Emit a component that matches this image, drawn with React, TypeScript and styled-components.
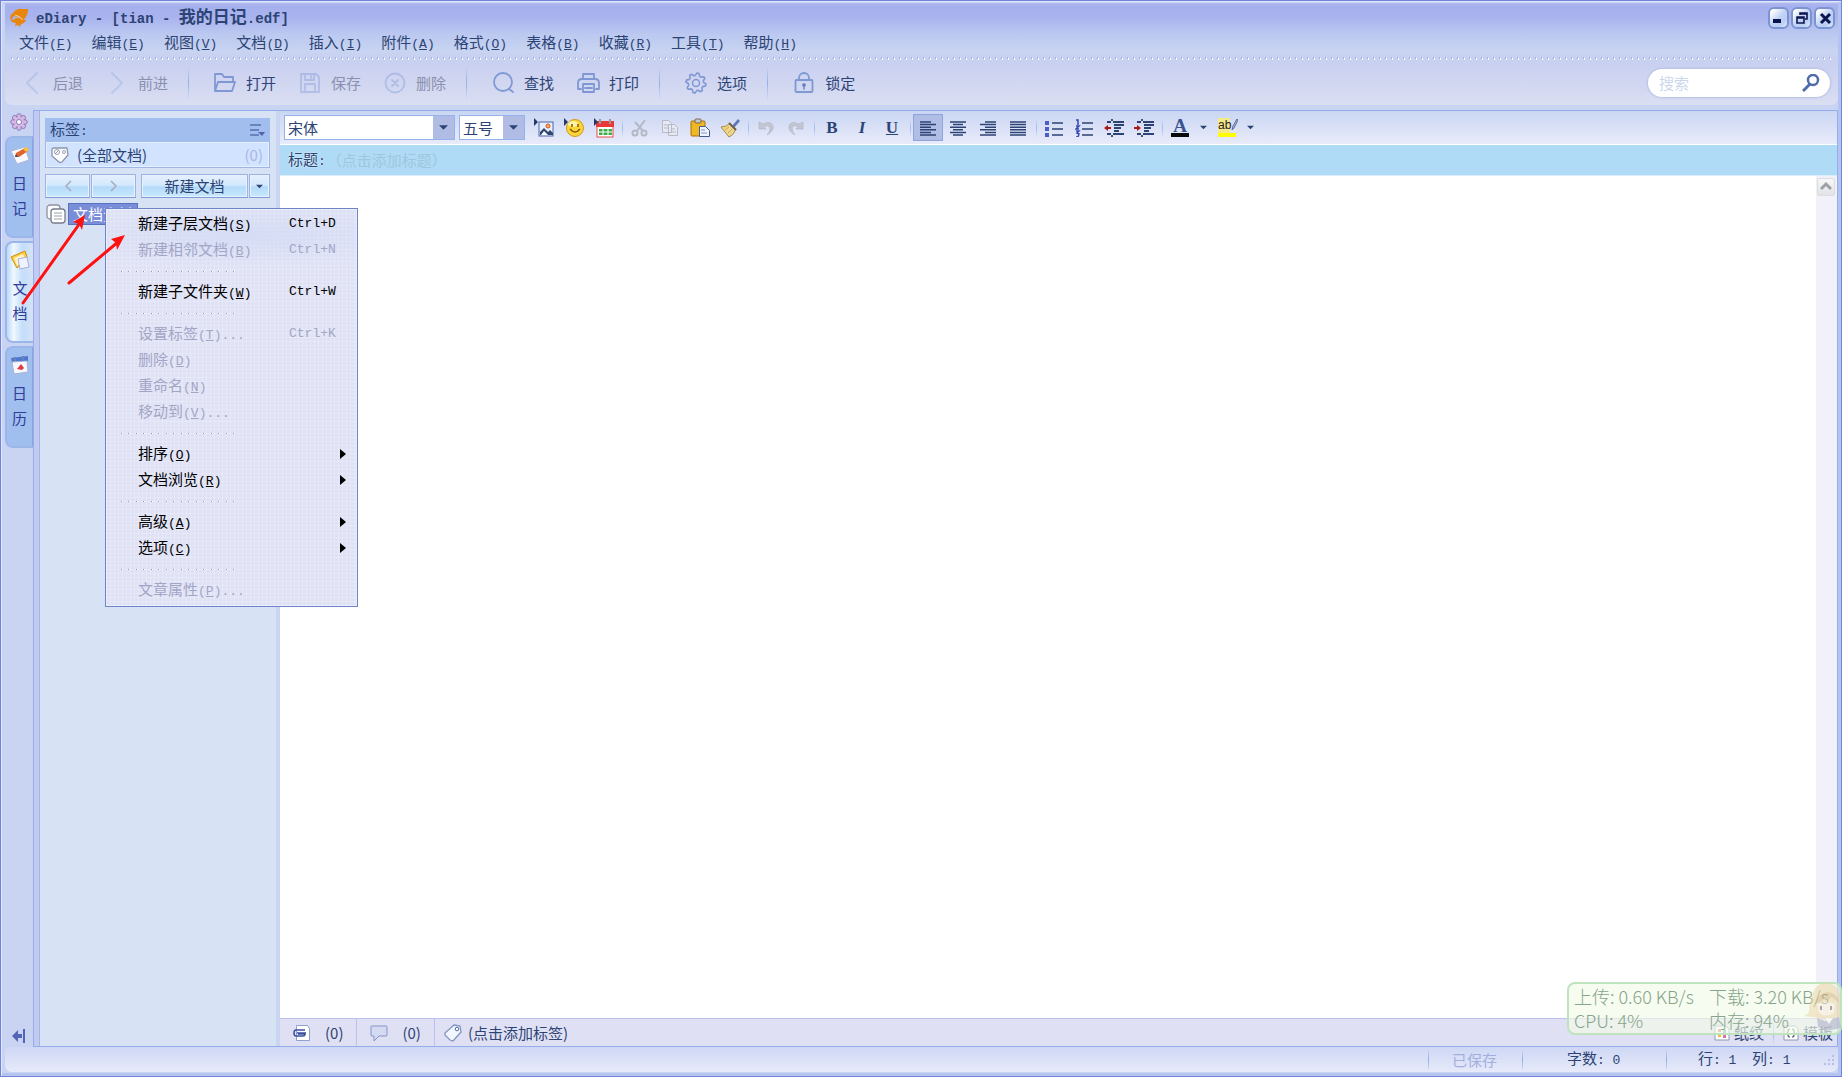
import React from "react";
import styled, { createGlobalStyle } from "styled-components";

const Global = createGlobalStyle`
  *, *::before, *::after { box-sizing: border-box; }
  html, body, #root { height: 100%; margin: 0; }
  body {
    overflow: hidden;
    font: 15px/20px "Noto Sans CJK SC", "Liberation Sans", sans-serif;
    color: #2c4374;
  }
  button, input, select { font: inherit; color: inherit; margin: 0; padding: 0; border: 0; background: none; }
  svg { display: block; flex: none; }
`;

/* ---------- text ---------- */
const Mono = styled.span<{ $size?: number }>`
  font-family: "Liberation Mono", "Noto Sans CJK SC", monospace;
  font-size: ${(p) => p.$size ?? 13}px;
  white-space: pre;
`;

/* Latin runs are set in the monospaced face; an ampersand marks the access key. */
function Label({ children, size }: { children: string; size?: number }) {
  const parts = children.split(/([\x20-\x7e]+)/).filter(Boolean);
  return (
    <span>
      {parts.map((part, i) => {
        if (!/^[\x20-\x7e]/.test(part)) return part;
        const at = part.indexOf("&");
        return (
          <Mono key={i} $size={size}>
            {at < 0 ? part : (
              <>{part.slice(0, at)}<u>{part[at + 1]}</u>{part.slice(at + 2)}</>
            )}
          </Mono>
        );
      })}
    </span>
  );
}

/* ---------- window ---------- */
const Window = styled.div`
  position: relative;
  display: flex;
  flex-direction: column;
  height: 100%;
  padding: 2px 3px 4px 4px;
  border: 1px solid #7184d8;
  background: #c9d3f2;
  box-shadow: inset 1px 1px 0 #dfe5fa, inset -3px -3px 0 #b4c3f0;
`;

const Head = styled.header`
  margin-bottom: 5px;
  border-radius: 0 0 7px 7px;
  background: linear-gradient(#b0baf0 0, #a5b0ee 3px, #a8b3ee 14px, #bcc9f0 32px, #c8d4f1 48px, #c9d0f0 60px, #d1d6f1 80px, #dadff3 102px);
`;

const TitleBar = styled.div`
  display: flex;
  align-items: center;
  height: 29px;
  padding: 0 3px 0 4px;
  gap: 6px;
`;

const Title = styled.h1`
  flex: 1;
  margin: 0;
  font-size: 17px;
  line-height: 20px;
  font-weight: 700;
`;

const CaptionButtons = styled.div`
  display: flex;
  gap: 2px;
`;

const CaptionButton = styled.button`
  display: grid;
  place-items: center;
  width: 21px;
  height: 22px;
  border: 2px solid #7b94cf;
  border-radius: 6px;
  background: linear-gradient(135deg, #fff 10%, #c2d4f6 50%, #b9cef4 75%, #e2edff);
`;

const MenuBar = styled.nav`
  display: flex;
  gap: 19px;
  height: 20px;
  padding-left: 14px;
`;

const MenuButton = styled.button`
  height: 20px;
  line-height: 20px;
  white-space: nowrap;
`;

const DotLine = styled.div`
  height: 9px;
  margin: 0 6px;
  background:
    linear-gradient(90deg, #a2b0e2 1px, transparent 1px) 0 5px / 6px 2px repeat-x,
    linear-gradient(90deg, #fff 1px, transparent 1px) 1px 6px / 6px 2px repeat-x;
`;

const ToolBar = styled.div`
  display: flex;
  align-items: center;
  gap: 22px;
  height: 44px;
  padding: 0 8px 0 15px;
`;

const ToolButton = styled.button`
  display: flex;
  align-items: center;
  gap: 9px;
  white-space: nowrap;
  &:disabled { color: #8b90ae; }
  &:disabled svg { opacity: 0.4; }
`;

const Rule = styled.span<{ $h: number }>`
  width: 1px;
  height: ${(p) => p.$h}px;
  background: linear-gradient(#c9d2f2, #8fb0ea, #d2daf4);
`;

const ToolRule = styled(Rule)`
  margin: 0 2px 0 -2px;
`;

const Search = styled.label`
  display: flex;
  align-items: center;
  width: 182px;
  height: 28px;
  margin-left: auto;
  padding: 0 10px 0 11px;
  border-radius: 14px;
  background: #fff;
  box-shadow: 0 0 2px 1px #b3c0e4;
  input { flex: 1; min-width: 0; outline: 0; }
  input::placeholder { color: #cbd8ec; opacity: 1; }
`;

/* ---------- body ---------- */
const Body = styled.div`
  flex: 1;
  display: flex;
  min-height: 0;
`;

const Rail = styled.aside`
  display: flex;
  flex-direction: column;
  gap: 3px;
  width: 28px;
`;

const RailButton = styled.button<{ $bottom?: boolean }>`
  display: grid;
  place-items: center;
  height: 23px;
  ${(p) => p.$bottom && "margin-top: auto;"}
`;

const RailTab = styled.button<{ $active?: boolean }>`
  display: flex;
  flex-direction: column;
  align-items: center;
  height: 102px;
  padding-top: 7px;
  border: 2px solid #9cb6ea;
  border-right: ${(p) => (p.$active ? "0" : "1px solid #8aa6e2")};
  border-radius: 8px 0 0 8px;
  color: #313c98;
  background: ${(p) => (p.$active ? "linear-gradient(90deg, #b9d9fa, #f0f8ff 25%, #c4defa 60%, #d6e2f6)" : "#a1bfee")};
  line-height: 25px;
  svg { margin-bottom: 5px; }
`;

const Workspace = styled.main`
  flex: 1;
  display: flex;
  min-width: 0;
  border: 1px solid #93aeea;
`;

const SideBar = styled.section`
  display: flex;
  flex-direction: column;
  width: 246px;
  padding: 7px 6px 0 6px;
  border-left: 5px solid #c4c9f0;
  border-right: 4px solid #c9d6f1;
  background: #d7e2f4;
  box-shadow: inset 1px 0 0 #9fb6ec;
`;

const TagHead = styled.div`
  display: flex;
  align-items: center;
  justify-content: space-between;
  height: 24px;
  padding: 0 5px;
  background: #a1beee;
`;

const TagRow = styled.button`
  display: flex;
  align-items: center;
  gap: 8px;
  height: 26px;
  padding: 0 6px 0 5px;
  border: 1px solid #9eb5e8;
  border-top: 0;
  background: #d2e3ff;
  box-shadow: inset 0 0 0 1px #e6f0ff;
`;

const Count = styled.span`
  margin-left: auto;
  color: #a9b6e4;
`;

const NavRow = styled.div`
  display: flex;
  gap: 1px;
  margin-top: 6px;
`;

const NavButton = styled.button<{ $w: number; $gap?: boolean }>`
  display: grid;
  place-items: center;
  width: ${(p) => p.$w}px;
  height: 24px;
  margin-left: ${(p) => (p.$gap ? 4 : 0)}px;
  border: 1px solid #9eb2e4;
  border-bottom-color: #7f9ad6;
  background: linear-gradient(#e6effc, #d3e9fe 45%, #b4daf9 55%, #c8eafe);
  box-shadow: inset 0 0 0 1px #e6f3ff;
  line-height: 20px;
`;

const TreeItem = styled.div`
  display: flex;
  align-items: center;
  gap: 2px;
  margin-top: 5px;
  padding-left: 1px;
`;

const TreeName = styled.button`
  height: 22px;
  padding: 0 4px;
  border: 1px solid #5a70c0;
  background: #7a8dd8;
  color: #fff;
  line-height: 20px;
`;

/* ---------- editor ---------- */
const Editor = styled.section`
  flex: 1;
  display: flex;
  flex-direction: column;
  min-width: 0;
  background: #fff;
`;

const FormatBar = styled.div`
  display: flex;
  align-items: center;
  height: 33px;
  padding: 0 4px;
  background: linear-gradient(#cad6f3, #e9ebfa);
`;

const SelectBox = styled.span<{ $w: number }>`
  display: grid;
  align-items: center;
  width: ${(p) => p.$w}px;
  height: 25px;
  margin-right: 4px;
  border: 1px solid #94b2ec;
  background: linear-gradient(to left, #b1bce5 21px, #fff 21px);
  > * { grid-area: 1 / 1; }
  select { height: 23px; padding-left: 3px; appearance: none; outline: 0; }
  svg { justify-self: end; margin-right: 6px; pointer-events: none; }
`;

const Group = styled.div`
  display: flex;
`;

const Tool = styled.button<{ $on?: boolean }>`
  display: grid;
  place-items: center;
  width: 30px;
  height: 27px;
  border: 1px solid ${(p) => (p.$on ? "#8ea4da" : "transparent")};
  background: ${(p) => (p.$on ? "#b0bde4" : "none")};
`;

const Drop = styled(Tool)`
  width: 17px;
`;

const Letter = styled.span<{ $kind: "b" | "i" | "u" }>`
  font: 700 17px/20px "Liberation Serif", serif;
  font-style: ${(p) => (p.$kind === "i" ? "italic" : "normal")};
  text-decoration: ${(p) => (p.$kind === "u" ? "underline" : "none")};
`;

const FormatRule = styled.span`
  width: 6px;
  height: 18px;
  background: linear-gradient(#d5dcf5, #9ebcf0, #dce2f7) center / 1px 100% no-repeat;
`;

const Heading = styled.label`
  display: flex;
  align-items: center;
  gap: 1px;
  height: 32px;
  padding-left: 8px;
  border-top: 1px solid #fff;
  border-bottom: 1px solid #d9edfa;
  background: #afdbf6;
  text-shadow: 0 0 2px #fff;
  input { flex: 1; outline: 0; text-shadow: none; }
  input::placeholder { color: #9fc6de; opacity: 1; }
`;

const Page = styled.div`
  flex: 1;
  display: flex;
  min-height: 0;
  justify-content: flex-end;
`;

const ScrollTrack = styled.div`
  width: 21px;
  padding: 2px 1px;
  background: #f2f1f9;
`;

const ScrollButton = styled.button`
  display: grid;
  place-items: center;
  width: 18px;
  height: 18px;
  border: 1px solid #dcdde0;
  border-radius: 2px;
  background: linear-gradient(#f7f7f7, #e2e3e5);
`;

const FootBar = styled.div`
  display: flex;
  align-items: center;
  height: 28px;
  padding: 0 4px 0 13px;
  border-top: 1px solid #bdc0ee;
  background: #e0e0f5;
`;

const FootItem = styled.button<{ $gap: number; $after?: number }>`
  display: flex;
  align-items: center;
  gap: ${(p) => p.$gap}px;
  height: 27px;
  ${(p) => p.$after && `border-right: 1px solid #bcc1ee; padding-right: 13px; margin-right: ${p.$after}px;`}
`;

const FootRight = styled.div`
  display: flex;
  align-items: center;
  gap: 9px;
  margin-left: auto;
`;

const FootLink = styled.button`
  display: flex;
  align-items: center;
  gap: 4px;
`;

/* ---------- status ---------- */
const Status = styled.footer`
  display: flex;
  align-items: center;
  justify-content: flex-end;
  height: 25px;
  border-radius: 0 0 7px 7px;
  background: linear-gradient(#ced7f4, #e7eafa);
`;

const StatusCell = styled.span<{ $w: number; $pad: number; $dim?: boolean }>`
  width: ${(p) => p.$w}px;
  padding-left: ${(p) => p.$pad}px;
  color: ${(p) => (p.$dim ? "#a3b0de" : "inherit")};
  white-space: nowrap;
`;

/* ---------- floating layers ---------- */
const ContextMenu = styled.div`
  position: absolute;
  left: 104px;
  top: 207px;
  width: 253px;
  padding: 2px 1px 3px;
  border: 1px solid #6f83c8;
  background:
    radial-gradient(ellipse 200px 34px at 55% 26px, #ced8f3b0 0, transparent 100%),
    repeating-linear-gradient(#ffffff38 0 1px, transparent 1px 4px),
    repeating-linear-gradient(90deg, #ffffff38 0 1px, transparent 1px 4px),
    #dfe2f5;
  box-shadow: inset 0 0 0 1px #eceffb;
`;

const MenuItem = styled.button`
  display: grid;
  grid-template-columns: 151px 51px 1fr;
  align-items: center;
  width: 100%;
  height: 26px;
  padding-left: 31px;
  color: #000;
  text-align: left;
  white-space: nowrap;
  &:disabled { color: #a3a5c6; }
`;

const MenuRule = styled.hr`
  height: 16px;
  width: 117px;
  margin: 0 0 0 14px;
  border: 0;
  background:
    linear-gradient(90deg, #9298b0 1px, #fff 1px 2px, transparent 2px) 0 8px / 15px 1px repeat-x,
    linear-gradient(90deg, #9298b0 1px, #fff 1px 2px, transparent 2px) 7px 8px / 15px 1px repeat-x;
`;

const Meter = styled.div`
  position: absolute;
  right: -1px;
  bottom: 41px;
  display: grid;
  grid-template-columns: 135px 1fr;
  align-content: start;
  width: 275px;
  height: 53px;
  padding: 0 5px;
  border: 2px solid #bfe3bd;
  border-radius: 8px;
  background: #f3fbe8a8;
  color: #86a48b;
  font: 300 18px/24px "Noto Sans CJK SC", sans-serif;
  white-space: nowrap;
`;

const Mascot = styled.svg`
  position: absolute;
  right: 0;
  bottom: 44px;
  opacity: 0.5;
`;

const Arrows = styled.svg`
  position: absolute;
  left: -1px;
  top: -1px;
  pointer-events: none;
`;

/* ---------- drawings ---------- */
const line = { fill: "none", stroke: "#7f98d4", strokeWidth: 1.8, strokeLinecap: "round" as const, strokeLinejoin: "round" as const };
const Ico = ({ children, s = 24 }: { children: React.ReactNode; s?: number }) => (
  <svg width={s} height={s} viewBox={`0 0 ${s} ${s}`} aria-hidden="true">{children}</svg>
);

const BackIcon = <Ico><path {...line} stroke="#8fb0e2" d="M17 2 7 12l10 10" /></Ico>;
const ForwardIcon = <Ico><path {...line} stroke="#8fb0e2" d="M7 2l10 10L7 22" /></Ico>;
const OpenIcon = <Ico><path {...line} d="M2 20V3h7l2 3h9v4M2 20l3-9h17l-3 9z" /></Ico>;
const SaveIcon = <Ico><path {...line} d="M3 3h15l3 3v15H3zM7 3v6h9V3M7 21v-8h10v8M13 5v2" /></Ico>;
const DeleteIcon = <Ico><circle {...line} cx="12" cy="12" r="9.5" /><path {...line} d="M9 9l6 6M15 9l-6 6" /></Ico>;
const FindIcon = <Ico><circle {...line} cx="12" cy="11" r="9" /><path {...line} d="M18 18l4 3" /></Ico>;
const PrintIcon = <Ico><path {...line} d="M7 7V3h11v4M5 18H2v-6q0-4 4-4h13q4 0 4 4v6h-3M7 13h11v8H7zM9 17h7" /></Ico>;
const LockIcon = <Ico><rect {...line} x="3.500" y="9" width="17" height="12" rx="1" /><path {...line} d="M7 9V7a5 5 0 0 1 10 0v2M12 14v4" /><circle cx="12" cy="14" r="1.800" fill="#5f78c0" /></Ico>;
const gearPath = Array.from({ length: 32 }, (_, i) => {
  const r = i % 4 < 2 ? 10 : 7.6;
  const a = ((i + 0.5) * Math.PI) / 16;
  return `${i ? "L" : "M"}${(12 + r * Math.cos(a)).toFixed(1)} ${(12 + r * Math.sin(a)).toFixed(1)}`;
}).join("") + "Z";
const GearIcon = <Ico><path {...line} strokeWidth={1.6} d={gearPath} /><circle {...line} strokeWidth={1.5} cx="12" cy="12" r="3.500" /></Ico>;

const Logo = (
  <svg width="21" height="20" viewBox="0 0 21 20" aria-hidden="true">
    <path fill="#e8860c" d="M4 5Q8 0 13 1l6 0q0 6-3 9l-2 4-2-1q0-3-2-4l-5-1q-2 1-2 4Q-1 8 4 5z" />
    <path fill="#e8860c" d="M1 10q1 5 6 5l-1 3 3-1 2 2 1-3q4-1 5-4-5 0-7-2-4-1-5 2-2 0-4-2z" />
    <path d="M6 7q5 1 8 5" stroke="#fbd08a" strokeWidth="1" fill="none" />
  </svg>
);

const Caret = ({ w = 9 }: { w?: number }) => (
  <svg width={w} height="5" viewBox="0 0 10 5" aria-hidden="true"><path d="M0 0h10L5 5z" fill="#2c4374" /></svg>
);

const Marker = <path d="M0 0v8l4-4z" fill="#24386a" />;
const PictureIcon = <Ico s={20}><rect x="5" y="4" width="14" height="14" fill="#e4efff" stroke="#4a67a8" /><circle cx="14" cy="8" r="2" fill="#ffb347" stroke="#d8502a" /><path d="M6 17v-3l4-4 4 4 2-2 3 3v2z" fill="#33466e" /><path d="M7 17l3-4 4 4z" fill="#fff" />{Marker}</Ico>;
const SmileIcon = <Ico s={20}><circle cx="11" cy="10" r="8.500" fill="#fbd53a" stroke="#d79a10" /><ellipse cx="9" cy="6" rx="5" ry="3" fill="#fff3a8" /><path d="M8 6v3M14 6v3M6 11q5 6 10 0" fill="none" stroke="#8a5a00" strokeWidth="1.500" />{Marker}</Ico>;
const DateIcon = <Ico s={20}><rect x="3" y="4" width="16" height="15" fill="#fff" stroke="#e84a4a" /><path d="M2 3h18v6H2z" fill="#e93838" /><path d="M6 1v5M16 1v5" stroke="#999" strokeWidth="2" /><path d="M5 11h13v6H5z" fill="#3bab4c" /><path d="M5 14h13M9 11v6M14 11v6" stroke="#fff" />{Marker}</Ico>;
const CutIcon = <Ico s={20}><g fill="none" stroke="#b5b8c6" strokeWidth="2"><path d="M15 2 7 13M5 4l8 9" /><circle cx="5" cy="15" r="2.500" /><circle cx="14" cy="15" r="2.500" /></g></Ico>;
const CopyIcon = <Ico s={20}><g fill="#e6e8f2" stroke="#b5b8c6"><path d="M2.500 2.500h6l3 3v9h-9zM8.500 6.500h6l3 3v8h-9z" /><path d="M4 7h4M4 10h4M11 11h4M11 14h5" /></g></Ico>;
const PasteIcon = <Ico s={20}><rect x="1" y="3" width="14" height="15" rx="1" fill="#f0b722" stroke="#a9710b" /><rect x="5" y="1" width="6" height="4" rx="1" fill="#c5c8d4" stroke="#7a6a40" /><path d="M9.500 8.500h6l4 4v6h-10z" fill="#eef3ff" stroke="#445a8c" /><path d="M11 12h4M11 15h6" stroke="#7f94c4" /></Ico>;
const BrushIcon = <Ico s={20}><path d="M12 8l6-7 2 2-6 7z" fill="#5d79b8" /><path d="M1 9q6 0 9-4l6 6q-3 7-7 8z" fill="#eed68c" stroke="#a98b47" /><path d="M9 5l7 7" stroke="#6f6252" strokeWidth="2" /><path d="M5 12l4-3M8 15l4-4" stroke="#c6a654" /></Ico>;
const UndoIcon = <Ico s={18}><path d="M2 3v7h7L7 8q5-3 6 1 0 4-3 7 7-4 6-9-2-6-10-2z" fill="#c3c5d2" stroke="#b1b4c4" strokeWidth=".6" /></Ico>;
const RedoIcon = <Ico s={18}><path d="M16 3v7H9l2-2Q6 5 5 9q0 4 3 7-7-4-6-9 2-6 10-2z" fill="#c3c5d2" stroke="#b1b4c4" strokeWidth=".6" /></Ico>;

const AlignIcon = ({ rows }: { rows: [number, number][] }) => (
  <Ico s={18}><path stroke="#2c4374" strokeWidth="1.500" d={rows.map(([x, w], i) => `M${x} ${3 + i * 2.6}h${w}`).join("")} /></Ico>
);
const BulletIcon = <Ico s={18}><path d="M0 2h4v4H0zM0 8h4v4H0zM0 14h4v4H0z" fill="#4a5fc4" /><path d="M7 4h11M7 10h11M7 16h11" stroke="#2c4374" strokeWidth="1.500" /></Ico>;
const NumberIcon = <Ico s={18}><path d="M1 1h2v5M1 7h3l-3 3h3M1 12h3l-2 2 2 1-1 3H1" fill="none" stroke="#3347b4" strokeWidth="1.500" /><path d="M7 4h11M7 10h11M7 16h11" stroke="#2c4374" strokeWidth="1.500" /></Ico>;
const indentLines = <path d="M3 4h4M9 4h11M10 7h10M10 10h7M10 13h5M3 16h4M9 16h11M8 1v2M8 17v2" stroke="#2c4374" strokeWidth="1.800" />;
const OutdentIcon = <Ico s={20}>{indentLines}<path d="M0 10l4-3v2h3v2H4v2z" fill="#a81818" /></Ico>;
const IndentIcon = <Ico s={20}>{indentLines}<path d="M7 10 3 7v2H0v2h3v2z" fill="#a81818" /></Ico>;

const Swatch = styled.span<{ $c: string }>`
  display: grid;
  justify-items: center;
  width: 18px;
  height: 19px;
  border-bottom: 4px solid ${(p) => p.$c};
  font: 700 19px/15px "Liberation Serif", serif;
  color: #3a5490;
`;
const Highlight = styled(Swatch)`
  grid-template-columns: auto auto;
  font: 12px/14px "Liberation Sans", sans-serif;
  color: #222;
  background: linear-gradient(90deg, #f6e98a 12px, transparent 12px);
`;

const flower = Array.from({ length: 8 }, (_, i) => (
  <circle key={i} cx={9 + 6 * Math.cos((i * Math.PI) / 4)} cy={9 + 6 * Math.sin((i * Math.PI) / 4)} r="2.300" fill="#d8b8e6" stroke="#8a7db8" />
));
const FlowerIcon = <Ico s={18}>{flower}<circle cx="9" cy="9" r="5" fill="#d8b8e6" /><circle cx="9" cy="9" r="2.500" fill="#fff" stroke="#8a7db8" /></Ico>;
const DiaryIcon = <Ico s={20}><path d="M1 6l14-4 4 13-12 4z" fill="#f8f9ff" stroke="#b0b6d4" /><path d="M5 12l1-4 9-5 3 3-9 6z" fill="#e0622c" /><path d="M13 4l4-2 2 3-3 2z" fill="#f5c044" /><path d="M5 12l1-3 2 3z" fill="#40466a" /></Ico>;
const DocIcon = <Ico s={20}><path d="M1 7 15 1l2 6-10 11z" fill="#ffcf3e" stroke="#cf8f12" /><path d="M4 8l9-4 2 5-8 7z" fill="#fff3c8" /><path d="M8 9l9-2 2 10-9 2z" fill="#eef1ff" stroke="#a9b1d4" /></Ico>;
const CalIcon = <Ico s={20}><path d="M1 3l17-2v5L2 8z" fill="#4d78cf" /><path d="M2 7l15-1 1 11-14 2z" fill="#f6f8ff" stroke="#a8b1d2" /><path d="M7 14l4-5 3 4-2 2z" fill="#e23b3b" /><path d="M5 2v4M13 1v4" stroke="#6c81b8" strokeWidth="2" /></Ico>;
const CollapseIcon = <Ico s={16}><path d="M1 8l6-6v4h4v4H7v4zM12 1h2v14h-2z" fill="#5464b4" /></Ico>;
const ListIcon = <Ico s={16}><path d="M1 3h11M1 8h9M1 13h9" stroke="#5570ae" strokeWidth="1.500" /><path d="M9 10h7l-3 4z" fill="#5560ae" /></Ico>;
const TagAllIcon = <Ico s={18}><path d="M1 3q0-1 2-1h13l1 7-6 7q-2 1-3 0L1 10z" fill="#fbfcff" stroke="#8d95a8" strokeWidth="1.300" /><circle cx="6" cy="6" r="2.500" fill="none" stroke="#9aa0b0" /><path d="M4 8l4-4" stroke="#9aa0b0" /><circle cx="13" cy="6" r="1.500" fill="none" stroke="#9aa0b0" /></Ico>;
const PagesIcon = <Ico s={20}><rect x="1" y="1" width="13" height="14" rx="3" fill="#fafbff" stroke="#8d939f" strokeWidth="1.300" /><rect x="5" y="5" width="14" height="14" rx="3" fill="#fff" stroke="#777d8b" strokeWidth="1.300" /><path d="M8 9h8M8 12h8M8 15h8" stroke="#9aa1b2" /></Ico>;
const AttachIcon = <Ico s={18}><path d="M3.500 1.500h11l2 3v12h-13z" fill="#fff" stroke="#90a0cc" /><path d="M12 6H3q-2 0-2 3t2 3h7q2 0 2-2H5M4 9h9" fill="none" stroke="#3a4da0" strokeWidth="1.500" /></Ico>;
const BubbleIcon = <Ico s={18}><path d="M2 2h14q1 0 1 1v8q0 1-1 1H9l-5 5v-5H2q-1 0-1-1V3q0-1 1-1z" fill="#d3daf2" stroke="#8495c4" /></Ico>;
const TagIcon = <Ico s={18}><path d="M10 1l6 1 1 6-8 9-3-1-5-5V9z" fill="#f2f7ff" stroke="#8095c0" strokeWidth="1.300" /><circle cx="13" cy="5" r="1.800" fill="#fff" stroke="#556aa0" /></Ico>;
const PaperIcon = <Ico s={16}><path d="M1 1h11l3 3v11H1z" fill="#fff" stroke="#8e98b8" /><path d="M4 4h3v3H4z" fill="#e86a6a" /><path d="M9 5h3v3H9z" fill="#78a5ea" /><path d="M4 9h3v3H4z" fill="#efb84e" /><path d="M9 10h3v3H9z" fill="#e0709c" /></Ico>;
const TemplateIcon = <Ico s={16}><path d="M1 1h11l3 3v11H1z" fill="#fff" stroke="#8e98b8" /><path d="M7 4Q5 4 5 6t-1 2q1 0 1 2t2 2M9 4q2 0 2 2t1 2q-1 0-1 2t-2 2" fill="none" stroke="#555f7c" strokeWidth="1.200" /></Ico>;

/* ---------- data ---------- */
const menus = ["文件(&F)", "编辑(&E)", "视图(&V)", "文档(&D)", "插入(&I)", "附件(&A)", "格式(&O)", "表格(&B)", "收藏(&R)", "工具(&T)", "帮助(&H)"];

const toolGroups: { text: string; icon: React.ReactNode; off?: boolean }[][] = [
  [{ text: "后退", icon: BackIcon, off: true }, { text: "前进", icon: ForwardIcon, off: true }],
  [{ text: "打开", icon: OpenIcon }, { text: "保存", icon: SaveIcon, off: true }, { text: "删除", icon: DeleteIcon, off: true }],
  [{ text: "查找", icon: FindIcon }, { text: "打印", icon: PrintIcon }],
  [{ text: "选项", icon: GearIcon }],
  [{ text: "锁定", icon: LockIcon }],
];

type Entry = { text: string; key?: string; off?: boolean; sub?: boolean } | null;
const entries: Entry[] = [
  { text: "新建子层文档(&S)", key: "Ctrl+D" },
  { text: "新建相邻文档(&B)", key: "Ctrl+N", off: true },
  null,
  { text: "新建子文件夹(&W)", key: "Ctrl+W" },
  null,
  { text: "设置标签(&T)...", key: "Ctrl+K", off: true },
  { text: "删除(&D)", off: true },
  { text: "重命名(&N)", off: true },
  { text: "移动到(&V)...", off: true },
  null,
  { text: "排序(&O)", sub: true },
  { text: "文档浏览(&R)", sub: true },
  null,
  { text: "高级(&A)", sub: true },
  { text: "选项(&C)", sub: true },
  null,
  { text: "文章属性(&P)...", off: true },
];

const tabs = [
  { text: "日记", icon: DiaryIcon },
  { text: "文档", icon: DocIcon, active: true },
  { text: "日历", icon: CalIcon },
];

export default function App() {
  return (
    <>
      <Global />
      <Window>
        <Head>
          <TitleBar>
            {Logo}
            <Title><Label size={14}>eDiary - [tian - 我的日记.edf]</Label></Title>
            <CaptionButtons>
              <CaptionButton aria-label="最小化"><Ico s={14}><path d="M1 8h8v4H1z" fill="#0c1450" /></Ico></CaptionButton>
              <CaptionButton aria-label="还原"><Ico s={14}><path d="M5 4V2h7v6h-2M2 6h7v6H2zM2 7h7M5 3h7" fill="none" stroke="#0c1450" strokeWidth="1.600" /></Ico></CaptionButton>
              <CaptionButton aria-label="关闭"><Ico s={14}><path d="M3 3l9 9M12 3l-9 9" stroke="#0c1450" strokeWidth="3" /></Ico></CaptionButton>
            </CaptionButtons>
          </TitleBar>
          <MenuBar>
            {menus.map((m) => <MenuButton key={m}><Label>{m}</Label></MenuButton>)}
          </MenuBar>
          <DotLine />
          <ToolBar>
            {toolGroups.map((group, i) => (
              <React.Fragment key={i}>
                {i > 0 && <ToolRule $h={32} />}
                {group.map((b) => (
                  <ToolButton key={b.text} disabled={b.off}>{b.icon}{b.text}</ToolButton>
                ))}
              </React.Fragment>
            ))}
            <Search>
              <input placeholder="搜索" aria-label="搜索" />
              <Ico s={18}><circle cx="11" cy="6" r="5" fill="none" stroke="#4f6cac" strokeWidth="2.500" /><path d="M8 10l-7 7" stroke="#4f6cac" strokeWidth="3" /></Ico>
            </Search>
          </ToolBar>
        </Head>

        <Body>
          <Rail>
            <RailButton aria-label="设置">{FlowerIcon}</RailButton>
            {tabs.map((t) => (
              <RailTab key={t.text} $active={t.active}>
                {t.icon}
                {[...t.text].map((c) => <span key={c}>{c}</span>)}
              </RailTab>
            ))}
            <RailButton $bottom aria-label="折叠">{CollapseIcon}</RailButton>
          </Rail>

          <Workspace>
            <SideBar>
              <TagHead><Label>标签:</Label>{ListIcon}</TagHead>
              <TagRow>{TagAllIcon}<span>(全部文档)</span><Count>(0)</Count></TagRow>
              <NavRow>
                <NavButton $w={45} aria-label="上一个"><Ico s={12}><path d="M9 1 4 6l5 5" fill="none" stroke="#a7adb8" strokeWidth="1.500" /></Ico></NavButton>
                <NavButton $w={45} aria-label="下一个"><Ico s={12}><path d="M3 1l5 5-5 5" fill="none" stroke="#a7adb8" strokeWidth="1.500" /></Ico></NavButton>
                <NavButton $w={107} $gap>新建文档</NavButton>
                <NavButton $w={21} aria-label="更多新建"><Caret w={7} /></NavButton>
              </NavRow>
              <TreeItem>{PagesIcon}<TreeName>文档资料</TreeName></TreeItem>
            </SideBar>

            <Editor>
              <FormatBar>
                <SelectBox $w={171}><select aria-label="字体"><option>宋体</option></select><Caret /></SelectBox>
                <SelectBox $w={66}><select aria-label="字号"><option>五号</option></select><Caret /></SelectBox>
                <Group>
                  <Tool aria-label="图片">{PictureIcon}</Tool>
                  <Tool aria-label="表情">{SmileIcon}</Tool>
                  <Tool aria-label="日期">{DateIcon}</Tool>
                </Group>
                <FormatRule />
                <Group>
                  <Tool aria-label="剪切">{CutIcon}</Tool>
                  <Tool aria-label="复制">{CopyIcon}</Tool>
                  <Tool aria-label="粘贴">{PasteIcon}</Tool>
                  <Tool aria-label="格式刷">{BrushIcon}</Tool>
                </Group>
                <FormatRule />
                <Group>
                  <Tool aria-label="撤消">{UndoIcon}</Tool>
                  <Tool aria-label="重做">{RedoIcon}</Tool>
                </Group>
                <FormatRule />
                <Group>
                  <Tool><Letter $kind="b">B</Letter></Tool>
                  <Tool><Letter $kind="i">I</Letter></Tool>
                  <Tool><Letter $kind="u">U</Letter></Tool>
                </Group>
                <FormatRule />
                <Group>
                  <Tool $on aria-label="左对齐"><AlignIcon rows={[[1, 11], [1, 16], [1, 11], [1, 16], [1, 11], [1, 16]]} /></Tool>
                  <Tool aria-label="居中"><AlignIcon rows={[[1, 16], [4, 10], [1, 16], [4, 10], [1, 16], [4, 10]]} /></Tool>
                  <Tool aria-label="右对齐"><AlignIcon rows={[[6, 11], [1, 16], [6, 11], [1, 16], [6, 11], [1, 16]]} /></Tool>
                  <Tool aria-label="两端对齐"><AlignIcon rows={[[1, 16], [1, 16], [1, 16], [1, 16], [1, 16], [1, 16]]} /></Tool>
                </Group>
                <FormatRule />
                <Group>
                  <Tool aria-label="项目符号">{BulletIcon}</Tool>
                  <Tool aria-label="编号">{NumberIcon}</Tool>
                  <Tool aria-label="减少缩进">{OutdentIcon}</Tool>
                  <Tool aria-label="增加缩进">{IndentIcon}</Tool>
                </Group>
                <FormatRule />
                <Group>
                  <Tool aria-label="字体颜色"><Swatch $c="#0a0a0a">A</Swatch></Tool>
                  <Drop aria-label="字体颜色选项"><Caret w={7} /></Drop>
                  <Tool aria-label="突出显示"><Highlight $c="#ffff00"><span>ab</span><svg width="7" height="14" viewBox="0 0 7 14"><path d="M1 12l1-4 4-7 1 1-4 8z" fill="#b8c2d8" stroke="#5a6c98" /></svg></Highlight></Tool>
                  <Drop aria-label="突出显示选项"><Caret w={7} /></Drop>
                </Group>
              </FormatBar>
              <Heading><Label>标题:</Label><input placeholder="（点击添加标题）" /></Heading>
              <Page>
                <ScrollTrack>
                  <ScrollButton aria-label="向上滚动"><Ico s={12}><path d="M1 8l5-5 5 5" fill="none" stroke="#9b9fa6" strokeWidth="3" /></Ico></ScrollButton>
                </ScrollTrack>
              </Page>
              <FootBar>
                <FootItem $gap={14} $after={13}>{AttachIcon}<span>(0)</span></FootItem>
                <FootItem $gap={14} $after={9}>{BubbleIcon}<span>(0)</span></FootItem>
                <FootItem $gap={6}>{TagIcon}<span>(点击添加标签)</span></FootItem>
                <FootRight>
                  <FootLink>{PaperIcon}纸纹</FootLink>
                  <Rule $h={20} />
                  <FootLink>{TemplateIcon}模板</FootLink>
                </FootRight>
              </FootBar>
            </Editor>
          </Workspace>
        </Body>

        <Status>
          <Rule $h={20} />
          <StatusCell $w={93} $pad={23} $dim>已保存</StatusCell>
          <Rule $h={20} />
          <StatusCell $w={143} $pad={44}><Label>字数: 0</Label></StatusCell>
          <Rule $h={20} />
          <StatusCell $w={153} $pad={31}><Label>行: 1  列: 1</Label></StatusCell>
          <Ico s={18}><path d="M12 4h2v2h-2zM8 8h2v2H8zM12 8h2v2h-2zM4 12h2v2H4zM8 12h2v2H8zM12 12h2v2h-2z" fill="#b3bfe6" /></Ico>
        </Status>

        <Meter>
          <span>上传: 0.60 KB/s</span><span>下载: 3.20 KB/s</span>
          <span>CPU: 4%</span><span>内存: 94%</span>
        </Meter>
        <Mascot width="38" height="50" viewBox="0 0 38 50" aria-hidden="true">
          <path d="M9 14Q12 1 24 1q12 1 13 14v22l-7 2-14-3-15-2q7-3 5-8z" fill="#ecd3a4" />
          <path d="M14 22q8-4 18 0l-1 9q-8 5-15 0z" fill="#fbeadb" />
          <path d="M12 22q3-11 12-12 10 0 12 11-5-5-8-6l-3 4-3-3-4 4z" fill="#d4ae76" />
          <path d="M18 24v4M28 24v4" stroke="#67506a" strokeWidth="2" />
          <path d="M14 36l8 3 14-4 2 11-14 3-9-4z" fill="#a3a6c4" />
          <path d="M22 36l4 6 4-6z" fill="#fff" />
          <path d="M6 1l4 3-1 4z" fill="#fff" />
        </Mascot>

        <ContextMenu role="menu">
          {entries.map((e, i) =>
            e === null ? <MenuRule key={i} /> : (
              <MenuItem key={i} role="menuitem" disabled={e.off}>
                <Label>{e.text}</Label>
                {e.key ? <Mono>{e.key}</Mono> : <span />}
                {e.sub && <svg width="6" height="10" viewBox="0 0 6 10"><path d="M0 0v10l6-5z" fill="#000" /></svg>}
              </MenuItem>
            ),
          )}
        </ContextMenu>

        <Arrows width="130" height="310" viewBox="0 0 130 310" aria-hidden="true">
          <path d="M23 303 80 223M69 283l49-41" stroke="#f11" strokeWidth="3" strokeLinecap="round" />
          <path d="M85 215l-12 7 6 2 3 6zM125 235l-14 4 5 4 1 7z" fill="#f11" />
        </Arrows>
      </Window>
    </>
  );
}
